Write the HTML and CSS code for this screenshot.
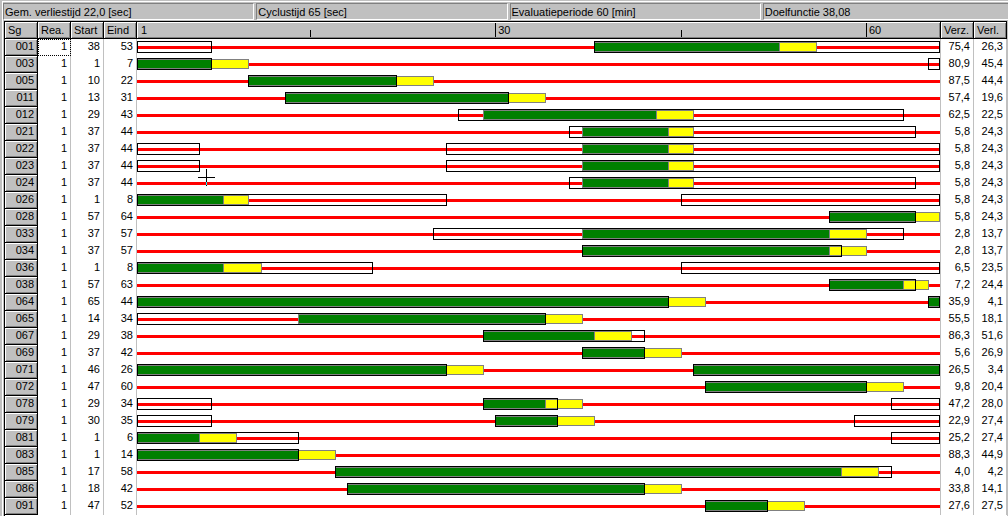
FILE: index.html
```
<!DOCTYPE html>
<html lang="nl">
<head>
<meta charset="utf-8">
<title>Fasendiagram</title>
<link rel="stylesheet" href="styles.css">
</head>
<body>
<header class="status">
<div class="panel">Gem. verliestijd 22,0 [sec]</div>
<div class="panel">Cyclustijd 65 [sec]</div>
<div class="panel">Evaluatieperiode 60 [min]</div>
<div class="panel">Doelfunctie 38,08</div>
</header>
<main class="sheet">
<table class="plan">
<colgroup><col class="c-key"><col class="c-num"><col class="c-num"><col class="c-num"><col><col class="c-num"><col class="c-num"></colgroup>
<thead>
<tr><th scope="col">Sg</th><th scope="col">Rea.</th><th scope="col">Start</th><th scope="col">Eind</th><th scope="col" class="scale"><div class="ruler"><span class="first" style="grid-column:1/5">1</span><span class="minor" style="grid-column:15/16"></span><span class="major" style="grid-column:30/34">30</span><span class="minor" style="grid-column:45/46"></span><span class="major" style="grid-column:60/64">60</span></div></th><th scope="col">Verz.</th><th scope="col">Verl.</th></tr>
</thead>
<tbody>
<tr><th scope="row">001</th><td class="focus">1</td><td>38</td><td>53</td><td class="chart"><div class="track"><span class="green" style="grid-column:38/53"></span><span class="yellow" style="grid-column:53/56"></span><span class="box" style="grid-column:1/7"></span><span class="box last" style="grid-column:38/66"></span></div></td><td>75,4</td><td>26,3</td></tr>
<tr><th scope="row">003</th><td>1</td><td>1</td><td>7</td><td class="chart"><div class="track"><span class="green" style="grid-column:1/7"></span><span class="yellow" style="grid-column:7/10"></span><span class="box" style="grid-column:1/7"></span><span class="box last" style="grid-column:65/66"></span></div></td><td>80,9</td><td>45,4</td></tr>
<tr><th scope="row">005</th><td>1</td><td>10</td><td>22</td><td class="chart"><div class="track"><span class="green" style="grid-column:10/22"></span><span class="yellow" style="grid-column:22/25"></span><span class="box" style="grid-column:10/22"></span></div></td><td>87,5</td><td>44,4</td></tr>
<tr><th scope="row">011</th><td>1</td><td>13</td><td>31</td><td class="chart"><div class="track"><span class="green" style="grid-column:13/31"></span><span class="yellow" style="grid-column:31/34"></span><span class="box" style="grid-column:13/31"></span></div></td><td>57,4</td><td>19,6</td></tr>
<tr><th scope="row">012</th><td>1</td><td>29</td><td>43</td><td class="chart"><div class="track"><span class="green" style="grid-column:29/43"></span><span class="yellow" style="grid-column:43/46"></span><span class="box" style="grid-column:27/63"></span></div></td><td>62,5</td><td>22,5</td></tr>
<tr><th scope="row">021</th><td>1</td><td>37</td><td>44</td><td class="chart"><div class="track"><span class="green" style="grid-column:37/44"></span><span class="yellow" style="grid-column:44/46"></span><span class="box" style="grid-column:36/64"></span></div></td><td>5,8</td><td>24,3</td></tr>
<tr><th scope="row">022</th><td>1</td><td>37</td><td>44</td><td class="chart"><div class="track"><span class="green" style="grid-column:37/44"></span><span class="yellow" style="grid-column:44/46"></span><span class="box" style="grid-column:1/6"></span><span class="box last" style="grid-column:26/66"></span></div></td><td>5,8</td><td>24,3</td></tr>
<tr><th scope="row">023</th><td>1</td><td>37</td><td>44</td><td class="chart"><div class="track"><span class="green" style="grid-column:37/44"></span><span class="yellow" style="grid-column:44/46"></span><span class="box" style="grid-column:1/6"></span><span class="box last" style="grid-column:26/66"></span></div></td><td>5,8</td><td>24,3</td></tr>
<tr><th scope="row">024</th><td>1</td><td>37</td><td>44</td><td class="chart"><div class="track"><span class="green" style="grid-column:37/44"></span><span class="yellow" style="grid-column:44/46"></span><span class="box" style="grid-column:36/64"></span><svg class="cursor" viewBox="0 0 17 17" aria-hidden="true" shape-rendering="crispEdges"><path d="M0 8h17v1H0zM8 0h1v17H8z" fill="#000"/><path d="M8 13h1v3H8z" fill="#0ff"/></svg></div></td><td>5,8</td><td>24,3</td></tr>
<tr><th scope="row">026</th><td>1</td><td>1</td><td>8</td><td class="chart"><div class="track"><span class="green" style="grid-column:1/8"></span><span class="yellow" style="grid-column:8/10"></span><span class="box" style="grid-column:1/26"></span><span class="box last" style="grid-column:45/66"></span></div></td><td>5,8</td><td>24,3</td></tr>
<tr><th scope="row">028</th><td>1</td><td>57</td><td>64</td><td class="chart"><div class="track"><span class="green" style="grid-column:57/64"></span><span class="yellow last" style="grid-column:64/66"></span><span class="box" style="grid-column:57/64"></span></div></td><td>5,8</td><td>24,3</td></tr>
<tr><th scope="row">033</th><td>1</td><td>37</td><td>57</td><td class="chart"><div class="track"><span class="green" style="grid-column:37/57"></span><span class="yellow" style="grid-column:57/60"></span><span class="box" style="grid-column:25/63"></span></div></td><td>2,8</td><td>13,7</td></tr>
<tr><th scope="row">034</th><td>1</td><td>37</td><td>57</td><td class="chart"><div class="track"><span class="green" style="grid-column:37/57"></span><span class="yellow" style="grid-column:57/60"></span><span class="box" style="grid-column:37/58"></span></div></td><td>2,8</td><td>13,7</td></tr>
<tr><th scope="row">036</th><td>1</td><td>1</td><td>8</td><td class="chart"><div class="track"><span class="green" style="grid-column:1/8"></span><span class="yellow" style="grid-column:8/11"></span><span class="box" style="grid-column:1/20"></span><span class="box last" style="grid-column:45/66"></span></div></td><td>6,5</td><td>23,5</td></tr>
<tr><th scope="row">038</th><td>1</td><td>57</td><td>63</td><td class="chart"><div class="track"><span class="green" style="grid-column:57/63"></span><span class="yellow" style="grid-column:63/65"></span><span class="box" style="grid-column:57/64"></span></div></td><td>7,2</td><td>24,4</td></tr>
<tr><th scope="row">064</th><td>1</td><td>65</td><td>44</td><td class="chart"><div class="track"><span class="green" style="grid-column:1/44"></span><span class="yellow" style="grid-column:44/47"></span><span class="box" style="grid-column:1/44"></span><span class="green last" style="grid-column:65/66"></span><span class="box last" style="grid-column:65/66"></span></div></td><td>35,9</td><td>4,1</td></tr>
<tr><th scope="row">065</th><td>1</td><td>14</td><td>34</td><td class="chart"><div class="track"><span class="green" style="grid-column:14/34"></span><span class="yellow" style="grid-column:34/37"></span><span class="box" style="grid-column:1/34"></span></div></td><td>55,5</td><td>18,1</td></tr>
<tr><th scope="row">067</th><td>1</td><td>29</td><td>38</td><td class="chart"><div class="track"><span class="green" style="grid-column:29/38"></span><span class="yellow" style="grid-column:38/41"></span><span class="box" style="grid-column:29/42"></span></div></td><td>86,3</td><td>51,6</td></tr>
<tr><th scope="row">069</th><td>1</td><td>37</td><td>42</td><td class="chart"><div class="track"><span class="green" style="grid-column:37/42"></span><span class="yellow" style="grid-column:42/45"></span><span class="box" style="grid-column:37/42"></span></div></td><td>5,6</td><td>26,9</td></tr>
<tr><th scope="row">071</th><td>1</td><td>46</td><td>26</td><td class="chart"><div class="track"><span class="green" style="grid-column:1/26"></span><span class="yellow" style="grid-column:26/29"></span><span class="box" style="grid-column:1/26"></span><span class="green last" style="grid-column:46/66"></span><span class="box last" style="grid-column:46/66"></span></div></td><td>26,5</td><td>3,4</td></tr>
<tr><th scope="row">072</th><td>1</td><td>47</td><td>60</td><td class="chart"><div class="track"><span class="green" style="grid-column:47/60"></span><span class="yellow" style="grid-column:60/63"></span><span class="box" style="grid-column:47/60"></span></div></td><td>9,8</td><td>20,4</td></tr>
<tr><th scope="row">078</th><td>1</td><td>29</td><td>34</td><td class="chart"><div class="track"><span class="green" style="grid-column:29/34"></span><span class="yellow" style="grid-column:34/37"></span><span class="box" style="grid-column:1/7"></span><span class="box" style="grid-column:29/35"></span><span class="box last" style="grid-column:62/66"></span></div></td><td>47,2</td><td>28,0</td></tr>
<tr><th scope="row">079</th><td>1</td><td>30</td><td>35</td><td class="chart"><div class="track"><span class="green" style="grid-column:30/35"></span><span class="yellow" style="grid-column:35/38"></span><span class="box" style="grid-column:1/7"></span><span class="box" style="grid-column:30/35"></span><span class="box last" style="grid-column:59/66"></span></div></td><td>22,9</td><td>27,4</td></tr>
<tr><th scope="row">081</th><td>1</td><td>1</td><td>6</td><td class="chart"><div class="track"><span class="green" style="grid-column:1/6"></span><span class="yellow" style="grid-column:6/9"></span><span class="box" style="grid-column:1/14"></span><span class="box last" style="grid-column:62/66"></span></div></td><td>25,2</td><td>27,4</td></tr>
<tr><th scope="row">083</th><td>1</td><td>1</td><td>14</td><td class="chart"><div class="track"><span class="green" style="grid-column:1/14"></span><span class="yellow" style="grid-column:14/17"></span><span class="box" style="grid-column:1/14"></span></div></td><td>88,3</td><td>44,9</td></tr>
<tr><th scope="row">085</th><td>1</td><td>17</td><td>58</td><td class="chart"><div class="track"><span class="green" style="grid-column:17/58"></span><span class="yellow" style="grid-column:58/61"></span><span class="box" style="grid-column:17/62"></span></div></td><td>4,0</td><td>4,2</td></tr>
<tr><th scope="row">086</th><td>1</td><td>18</td><td>42</td><td class="chart"><div class="track"><span class="green" style="grid-column:18/42"></span><span class="yellow" style="grid-column:42/45"></span><span class="box" style="grid-column:18/42"></span></div></td><td>33,8</td><td>14,1</td></tr>
<tr><th scope="row">091</th><td>1</td><td>47</td><td>52</td><td class="chart"><div class="track"><span class="green" style="grid-column:47/52"></span><span class="yellow" style="grid-column:52/55"></span><span class="box" style="grid-column:47/52"></span></div></td><td>27,6</td><td>27,5</td></tr>
</tbody>
</table>
</main>
</body>
</html>
```
FILE: styles.css
```
* {
  box-sizing: border-box;
}

body {
  margin: 0;
  background: #c0c0c0;
  color: #000;
  font: 11px/16px "Liberation Sans", Arial, sans-serif;
  overflow-x: hidden;
}

/* Status bar with sunken panels */
.status {
  display: grid;
  grid-template-columns: repeat(4, 1fr);
  gap: 2px;
  margin: 1px -6px 0 2px;
  padding: 1px 0;
  border-top: 1px solid #fff;
  border-left: 1px solid #fff;
}

.panel {
  height: 17px;
  padding-left: 1px;
  border: 1px solid;
  border-color: #808080 #fff #fff #808080;
  white-space: nowrap;
}

/* Table */
.sheet {
  margin-left: 2px;
  padding: 0 1px;
  border-left: 1px solid #fff;
}

.plan {
  width: 100%;
  padding-bottom: 1px;
  table-layout: fixed;
  border-spacing: 0;
  border-left: 1px solid #000;
  background: #fff;
}

.c-key,
.c-num {
  width: 33px;
}

.plan th,
.plan td {
  height: 17px;
  padding: 0 3px 0 0;
  border-right: 1px solid #c0c0c0;
  font-weight: normal;
  line-height: 14px;
  text-align: right;
  vertical-align: top;
  white-space: nowrap;
}

.plan th {
  background: #c0c0c0;
  border-right: 1px solid #000;
  border-bottom: 1px solid #000;
  box-shadow: inset 1px 1px #fff, inset -1px -1px #808080;
}

.plan thead th {
  height: 18px;
  padding: 0 0 0 3px;
  border-top: 1px solid #000;
  line-height: 16px;
  text-align: left;
}

.plan td.focus {
  outline: 1px dotted #000;
  outline-offset: -1px;
}

.plan .chart,
.plan thead .scale {
  padding: 0;
}

/* One grid column per second of the cycle */
.ruler,
.track {
  display: grid;
  grid-template-columns: repeat(65, minmax(0, 1fr));
}

.ruler {
  height: 16px;
}

.ruler span {
  grid-row: 1;
}

.first {
  padding-left: 4px;
}

.major,
.minor {
  margin: 1px 0;
  border-left: 1px solid #000;
}

.major {
  padding-left: 2px;
  line-height: 14px;
}

.minor {
  margin-top: 8px;
}

.track {
  position: relative;
  height: 17px;
  background: linear-gradient(#f00, #f00) 0 7px / 100% 3px no-repeat;
}

.green,
.yellow,
.box {
  grid-row: 1;
  margin-right: -1px;
}

.green,
.yellow {
  height: 10px;
  margin-top: 3px;
  border: 1px solid #808080;
}

.green {
  background: #008000;
}

.yellow {
  background: #ff0;
}

.box {
  height: 12px;
  margin-top: 2px;
  border: 1px solid #000;
}

.last {
  margin-right: 0;
}

/* Crosshair pointer over the chart */
.cursor {
  position: absolute;
  left: 61px;
  top: -6px;
  width: 17px;
  height: 17px;
}
```
